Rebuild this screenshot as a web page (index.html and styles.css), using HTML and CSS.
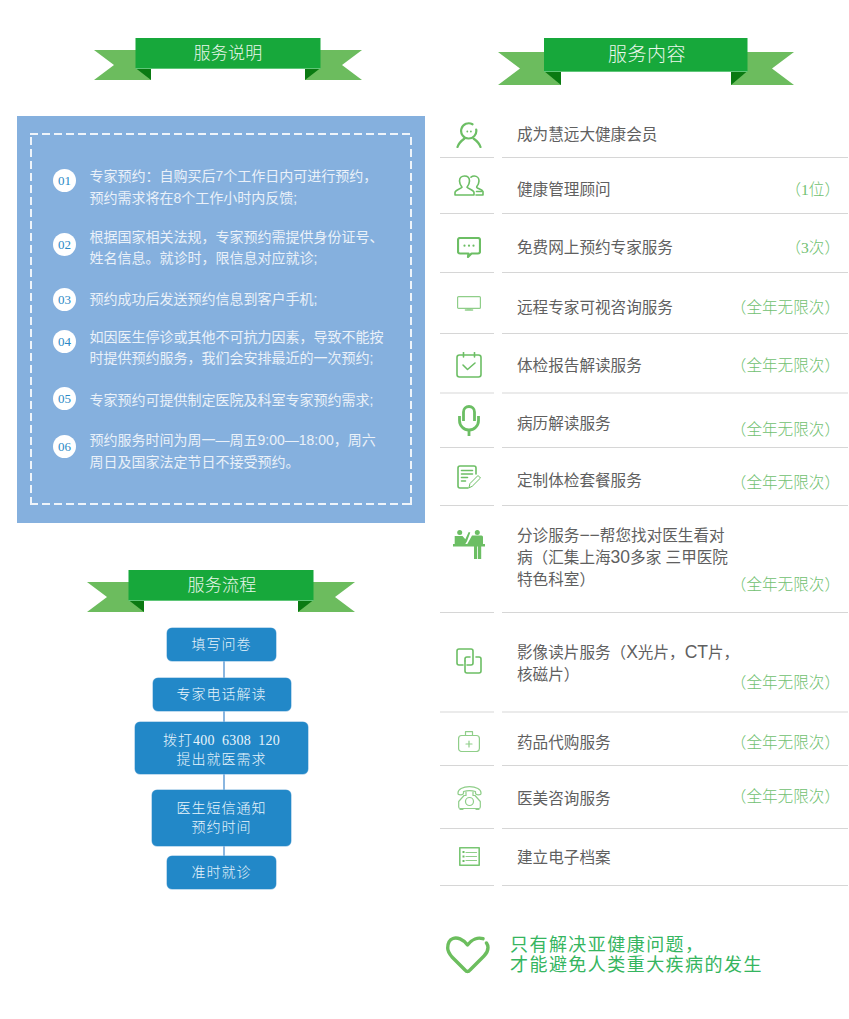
FILE: index.html
```html
<!DOCTYPE html>
<html lang="zh-CN">
<head>
<meta charset="utf-8">
<title>服务说明</title>
<link rel="stylesheet" href="styles.css">
</head>
<body>
<main class="page">
  <section class="col-left">
    <div class="ribbon ribbon-a">
      <svg class="ribbon-art" width="268" height="43" viewBox="0 0 268 43">
        <polygon class="tail" points="0,12 57,12 57,42 0,42 20,27"/>
        <polygon class="tail" points="268,12 211,12 211,42 268,42 248,27"/>
        <polygon class="fold" points="41.5,30 57,30 57,42"/>
        <polygon class="fold" points="226.5,30 211,30 211,42"/>
        <rect class="band" x="41.5" y="0" width="185" height="30"/>
        <rect class="band-edge" x="41.5" y="30" width="185" height="1"/>
      </svg>
      <h2 class="ribbon-title">服务说明</h2>
    </div>

    <div class="panel">
      <ol class="notes">
        <li class="note-item"><span class="badge">01</span><p>专家预约：自购买后7个工作日内可进行预约，<br>预约需求将在8个工作小时内反馈;</p></li>
        <li class="note-item"><span class="badge">02</span><p>根据国家相关法规，专家预约需提供身份证号、<br>姓名信息。就诊时，限信息对应就诊;</p></li>
        <li class="note-item"><span class="badge">03</span><p>预约成功后发送预约信息到客户手机;</p></li>
        <li class="note-item"><span class="badge">04</span><p>如因医生停诊或其他不可抗力因素，导致不能按<br>时提供预约服务，我们会安排最近的一次预约;</p></li>
        <li class="note-item"><span class="badge">05</span><p>专家预约可提供制定医院及科室专家预约需求;</p></li>
        <li class="note-item"><span class="badge">06</span><p>预约服务时间为周一—周五9:00—18:00，周六<br>周日及国家法定节日不接受预约。</p></li>
      </ol>
    </div>

    <div class="ribbon ribbon-b">
      <svg class="ribbon-art" width="268" height="43" viewBox="0 0 268 43">
        <polygon class="tail" points="0,12 57,12 57,42 0,42 20,27"/>
        <polygon class="tail" points="268,12 211,12 211,42 268,42 248,27"/>
        <polygon class="fold" points="41.5,30 57,30 57,42"/>
        <polygon class="fold" points="226.5,30 211,30 211,42"/>
        <rect class="band" x="41.5" y="0" width="185" height="30"/>
        <rect class="band-edge" x="41.5" y="30" width="185" height="1"/>
      </svg>
      <h2 class="ribbon-title">服务流程</h2>
    </div>

    <div class="flow">
      <div class="step step-s">填写问卷</div>
      <div class="link link-17"></div>
      <div class="step step-m">专家电话解读</div>
      <div class="link link-11"></div>
      <div class="step step-l"><span>拨打<span class="step-num">400&nbsp;&nbsp;6308&nbsp;&nbsp;120</span><br>提出就医需求</span></div>
      <div class="link link-16"></div>
      <div class="step step-m2">医生短信通知<br>预约时间</div>
      <div class="link link-10"></div>
      <div class="step step-s">准时就诊</div>
    </div>
  </section>

  <section class="col-right">
    <div class="ribbon ribbon-c">
      <svg class="ribbon-art" width="296" height="47" viewBox="0 0 296 47">
        <polygon class="tail" points="0,14 63,14 63,47 0,47 22,30.5"/>
        <polygon class="tail" points="296,14 233,14 233,47 296,47 274,30.5"/>
        <polygon class="fold" points="46,33 63,33 63,47"/>
        <polygon class="fold" points="249.5,33 233,33 233,47"/>
        <rect class="band" x="46" y="0" width="203.5" height="33"/>
        <rect class="band-edge" x="46" y="33" width="203.5" height="1"/>
      </svg>
      <h2 class="ribbon-title ribbon-title-lg">服务内容</h2>
    </div>

    <ul class="services">
      <li class="row">
        <div class="row-icon">
          <svg class="ic ic-b" width="26" height="26" viewBox="0 0 26 26"><path d="M16.5 2.3A7.6 7.6 0 1 0 20.2 7.5"/><path d="M1.5 25C2.500 21.500 5 19 8.500 16.500"/><path d="M24.500 25C23.500 21.500 21 19 17.500 16.500"/><circle class="dot" cx="11.3" cy="9.5" r=".9"/><circle class="dot" cx="14.9" cy="9.5" r=".9"/></svg>
        </div>
        <div class="row-body"><p class="row-text">成为慧远大健康会员</p></div>
      </li>
      <li class="row">
        <div class="row-icon">
          <svg class="ic ic-m" width="30" height="21" viewBox="0 0 30 21"><path d="M1 20v-2.500c0-2.300 5-3.200 7-5.200-1.500-2-2.500-4-2.500-6.300C5.500 3 7.500 1 10.500 1s5 2 5 5c0 2.300-1 4.300-2.500 6.300 2 2 7 2.900 7 5.200V20z"/><path d="M17 2.200C18 1.400 19 1 20.200 1c3 0 4.800 2.300 4.800 5 0 2.200-1 4-2.300 5.800-.8 1.500 5.300 2.200 6.300 4.700v3.500h-7"/><path d="M22.500 16.500h5"/></svg>
        </div>
        <div class="row-body"><p class="row-text">健康管理顾问</p><span class="row-note">（1位）</span></div>
      </li>
      <li class="row">
        <div class="row-icon">
          <svg class="ic ic-b" width="24" height="21" viewBox="0 0 24 21"><path d="M3 1h18a2 2 0 0 1 2 2v11.500a2 2 0 0 1-2 2h-6.500L11 20l.5-3.500H3a2 2 0 0 1-2-2V3a2 2 0 0 1 2-2z"/><circle class="dot" cx="7.500" cy="8.700" r="1.100"/><circle class="dot" cx="12" cy="8.700" r="1.100"/><circle class="dot" cx="16.500" cy="8.700" r="1.100"/></svg>
        </div>
        <div class="row-body"><p class="row-text">免费网上预约专家服务</p><span class="row-note">（3次）</span></div>
      </li>
      <li class="row">
        <div class="row-icon">
          <svg class="ic ic-t" width="24" height="15" viewBox="0 0 24 15"><rect x=".6" y=".6" width="22.800" height="11.800" rx="1"/><path d="M8.500 14h7" stroke-width="1.600"/><path d="M10.500 12.800h3"/></svg>
        </div>
        <div class="row-body"><p class="row-text">远程专家可视咨询服务</p><span class="row-note">（全年无限次）</span></div>
      </li>
      <li class="row row-soft">
        <div class="row-icon">
          <svg class="ic ic-m" width="26" height="26" viewBox="0 0 26 26"><rect x="1" y="3" width="24" height="22" rx="2.500"/><path d="M7.500 .5v4.500M18.500 .5v4.500"/><path d="M7 13l4.500 4.500L19 11"/></svg>
        </div>
        <div class="row-body"><p class="row-text">体检报告解读服务</p><span class="row-note">（全年无限次）</span></div>
      </li>
      <li class="row">
        <div class="row-icon">
          <svg class="ic ic-h" width="22" height="31" viewBox="0 0 22 31"><path d="M5.500 16V7a5.500 5.500 0 0 1 11 0v9"/><path d="M1.500 11v4.500a9.500 9.500 0 0 0 19 0V11"/><path d="M11 25v6"/></svg>
        </div>
        <div class="row-body"><p class="row-text">病历解读服务</p><span class="row-note">（全年无限次）</span></div>
      </li>
      <li class="row">
        <div class="row-icon">
          <svg class="ic ic-m" width="24" height="24" viewBox="0 0 24 24"><path d="M19 9V3a2 2 0 0 0-2-2H3a2 2 0 0 0-2 2v18a2 2 0 0 0 2 2h8"/><path d="M4.500 5.500h11M4.500 9h11M4.500 12.500h6M4.500 16h4"/><path d="M12 22.500l1-4 8-8 2.500 2.500-8 8z" stroke-width="1"/></svg>
        </div>
        <div class="row-body"><p class="row-text">定制体检套餐服务</p><span class="row-note">（全年无限次）</span></div>
      </li>
      <li class="row">
        <div class="row-icon">
          <svg class="ic-fill" width="32" height="29" viewBox="0 0 32 29"><circle cx="6.700" cy="2.600" r="2.500"/><circle cx="24.300" cy="2.600" r="2.500"/><path d="M1.700 6h7.800l2.800 3.300L15.700 2l1.600.6-3.300 8.600-2 3.300H1.700z"/><path d="M19 5.600h9.500a1.500 1.500 0 0 1 1.500 1.500v7.400H14l5-8.900z"/><rect x="0" y="14" width="32" height="2.500"/><rect x="21" y="16" width="3.200" height="13"/><rect x="25" y="16" width="3.200" height="13"/></svg>
        </div>
        <div class="row-body"><p class="row-text">分诊服务<span class="row-latin">−−</span>帮您找对医生看对<br>病（汇集上海<span class="row-latin">30</span>多家 三甲医院<br>特色科室）</p><span class="row-note">（全年无限次）</span></div>
      </li>
      <li class="row row-soft">
        <div class="row-icon">
          <svg class="ic ic-m" width="26" height="26" viewBox="0 0 26 26"><path d="M7 17H3a2 2 0 0 1-2-2V3a2 2 0 0 1 2-2h12a2 2 0 0 1 2 2v12a2 2 0 0 1-2 2h-4"/><path d="M9 13v-2a2 2 0 0 1 2-2h3"/><path d="M20 9h3a2 2 0 0 1 2 2v12a2 2 0 0 1-2 2H11a2 2 0 0 1-2-2V13"/></svg>
        </div>
        <div class="row-body"><p class="row-text">影像读片服务（<span class="row-latin">X</span>光片，<span class="row-latin">CT</span>片，<br>核磁片）</p><span class="row-note">（全年无限次）</span></div>
      </li>
      <li class="row">
        <div class="row-icon">
          <svg class="ic ic-t" width="22" height="21" viewBox="0 0 22 21"><rect x=".6" y="4.500" width="20.800" height="16" rx="3"/><path d="M7.500 4.500V.7h7v3.800"/><path d="M11 10v6M8 13h6"/></svg>
        </div>
        <div class="row-body"><p class="row-text">药品代购服务</p><span class="row-note">（全年无限次）</span></div>
      </li>
      <li class="row">
        <div class="row-icon">
          <svg class="ic ic-t" width="25" height="24" viewBox="0 0 25 24"><path d="M1 7.500C.5 3.500 6 .7 12.500.7S24.500 3.500 24 7.500c0 1-1 1.300-2.500 1.300S18.500 8.500 18.500 7V5.500c-3.500-1-8.500-1-12 0V7c0 1.500-1 1.800-3 1.800S1 8.500 1 7.500z"/><path d="M9 6v3.500H7l-5.300 6V21a1.500 1.500 0 0 0 1.500 1.500h18.600a1.500 1.500 0 0 0 1.500-1.500v-5.500L18 9.500h-2V6"/><circle cx="12.500" cy="15.500" r="4"/><path d="M3 23.300h3M19 23.300h3"/></svg>
        </div>
        <div class="row-body"><p class="row-text">医美咨询服务</p><span class="row-note">（全年无限次）</span></div>
      </li>
      <li class="row">
        <div class="row-icon">
          <svg class="ic ic-t" width="21" height="19" viewBox="0 0 21 19"><rect class="list-frame" x=".8" y=".8" width="19.400" height="17.400"/><path class="list-bul" d="M3.500 5h2M3.500 9.500h2M3.500 14h2"/><path d="M7 5.500h10.500M7 9.500h10.500M7 13.500h10.500"/></svg>
        </div>
        <div class="row-body"><p class="row-text">建立电子档案</p></div>
      </li>
    </ul>

    <div class="slogan">
      <svg class="heart" width="44" height="38" viewBox="0 0 44 38"><path d="M37 2.700C32 1 26 3 21.500 9 17 3 11 1 7 2.500 3 4 1.700 8 1.700 12c0 3.500 1.800 6 4.300 9l13 13c1.500 2 3.500 2 5 0l14-14c3-3 4-6 4-8.500 0-1.500-.5-3-1.500-4.500"/></svg>
      <p class="slogan-text">只有解决亚健康问题，<br>才能避免人类重大疾病的发生</p>
    </div>
  </section>
</main>
</body>
</html>
```

FILE: styles.css
```css
* { box-sizing: border-box; }

html, body {
  margin: 0;
  padding: 0;
  background: #fff;
}

p, ol, ul, h2 {
  margin: 0;
  padding: 0;
  list-style: none;
  font-weight: 400;
}

.page {
  display: grid;
  grid-template-columns: 425px 409px;
  column-gap: 15px;
  width: 849px;
  height: 1019px;
  overflow: hidden;
  font-family: "Liberation Sans", "Noto Sans CJK SC", sans-serif;
}

/* ribbons */
.ribbon {
  display: grid;
  justify-items: center;
  align-items: start;
}
.ribbon > * { grid-area: 1 / 1; }
.ribbon-art { display: block; }
.tail { fill: #6cbc5e; }
.fold { fill: #0a7a12; }
.band { fill: #17a83b; }
.band-edge { fill: #5fc678; }

.ribbon-a { width: 268px; margin: 38px 0 0 94px; }
.ribbon-b { width: 268px; margin: 47px 0 0 87px; }
.ribbon-c { width: 296px; margin: 38px 0 0 58px; }

.ribbon-title {
  margin-top: 1px;
  font-family: "Liberation Serif", "Noto Sans CJK SC", serif;
  font-weight: 300;
  font-size: 17px;
  letter-spacing: .3px;
  line-height: 30px;
  color: #eaf7ec;
}
.ribbon-b .ribbon-title { margin-left: 2px; }
.ribbon-title-lg {
  margin: 0 0 0 2px;
  font-size: 19px;
  letter-spacing: .5px;
  line-height: 33px;
}

/* blue panel */
.panel {
  width: 408px;
  height: 407px;
  margin: 35px 0 0 17px;
  padding: 17px 13px 17px;
  background: #85b0de;
}
.notes {
  height: 372px;
  padding: 33px 20px 0 23px;
  background-image:
    repeating-linear-gradient(90deg, #eef4fa 0 8px, transparent 8px 12px),
    repeating-linear-gradient(90deg, #eef4fa 0 8px, transparent 8px 12px),
    repeating-linear-gradient(0deg, #eef4fa 0 8px, transparent 8px 12px),
    repeating-linear-gradient(0deg, #eef4fa 0 8px, transparent 8px 12px);
  background-size: 100% 2px, 100% 2px, 2px 100%, 2px 100%;
  background-position: 0 0, 0 100%, 0 0, 100% 0;
  background-repeat: no-repeat;
}
.note-item {
  display: flex;
  align-items: flex-start;
  column-gap: 13.500px;
  font-size: 14px;
  line-height: 21.500px;
  color: #eaf1f9;
  white-space: nowrap;
}
.note-item:nth-child(2) { margin-top: 17.500px; }
.note-item:nth-child(3) { margin-top: 19px; }
.note-item:nth-child(4) { margin-top: 16px; }
.note-item:nth-child(5) { margin-top: 20px; }
.note-item:nth-child(6) { margin-top: 19px; }

.badge {
  flex: none;
  display: flex;
  align-items: center;
  justify-content: center;
  width: 23px;
  height: 23px;
  border-radius: 50%;
  background: #fff;
  font-family: "Liberation Serif", serif;
  font-size: 13px;
  line-height: 1;
  color: #2b8ac6;
}
.note-item:nth-child(1) .badge { margin-top: 3px; }
.note-item:nth-child(2) .badge { margin-top: 6px; }
.note-item:nth-child(3) .badge { margin-top: -1px; }
.note-item:nth-child(4) .badge { margin-top: 3px; }
.note-item:nth-child(5) .badge { margin-top: -3px; }
.note-item:nth-child(6) .badge { margin-top: 5px; }

/* process flow */
.flow {
  display: flex;
  flex-direction: column;
  align-items: center;
  width: 443px;
  margin-top: 15px;
  font-family: "Liberation Serif", "Noto Sans CJK SC", serif;
}
.step {
  display: flex;
  align-items: center;
  justify-content: center;
  text-align: center;
  border-radius: 5px;
  background: #2288c8;
  box-shadow: 0 0 0 .5px #7fb6de;
  color: #e8f4fb;
  font-size: 14px;
  letter-spacing: 1px;
  line-height: 19px;
  font-weight: 300;
}
.step-num { letter-spacing: .2px; }
.step-s { width: 109px; height: 33px; }
.step-m { width: 138px; height: 33px; }
.step-l { width: 173.500px; height: 52px; padding-top: 3px; }
.step-m2 { width: 138.500px; height: 56px; }
.link {
  width: 2px;
  margin-left: 5px;
  background: #8ab6e0;
}
.link-17 { height: 17px; }
.link-11 { height: 11px; }
.link-16 { height: 16px; }
.link-10 { height: 10px; }

/* services */
.services { margin-top: 31px; }
.row {
  display: grid;
  grid-template-columns: 54px 346px;
  column-gap: 8px;
  height: var(--h);
}
.row-icon, .row-body {
  border-bottom: 1px solid #d6d6d6;
}
.row-soft .row-icon, .row-soft .row-body {
  border-bottom: 2px solid #ebebeb;
}
.row-icon {
  display: flex;
  justify-content: center;
  align-items: flex-start;
  padding-left: 4px;
  padding-top: var(--i);
}
.row-icon svg { display: block; flex: none; }
.row-body {
  display: flex;
  align-items: flex-start;
  justify-content: space-between;
  padding: 0 16px 0 15px;
}
.row-text {
  flex: 0 0 190px;
  min-width: 0;
  margin-top: var(--t);
  font-size: 15.600px;
  line-height: 22px;
  color: #606060;
  white-space: nowrap;
}
.row-latin { font-size: 17.500px; line-height: 1; }
.row-note {
  flex: none;
  margin-top: var(--n);
  margin-right: -8px;
  font-family: "Liberation Serif", "Noto Sans CJK SC", serif;
  font-weight: 300;
  font-size: 15.600px;
  line-height: 22px;
  color: #70bf70;
  white-space: nowrap;
}

.row:nth-child(1)  { --h: 42px;  --i: 6px;  --t: 8px;  --n: 8px; }
.row:nth-child(2)  { --h: 56px;  --i: 17px; --t: 21px; --n: 21px; }
.row:nth-child(3)  { --h: 59px;  --i: 23px; --t: 23px; --n: 23px; }
.row:nth-child(4)  { --h: 61px;  --i: 23px; --t: 24px; --n: 24px; }
.row:nth-child(5)  { --h: 60px;  --i: 18px; --t: 21px; --n: 21px; }
.row:nth-child(6)  { --h: 54px;  --i: 11px; --t: 19px; --n: 25px; }
.row:nth-child(7)  { --h: 58px;  --i: 17px; --t: 22px; --n: 24px; }
.row:nth-child(8)  { --h: 107px; --i: 24px; --t: 19px; --n: 68px; }
.row:nth-child(9)  { --h: 100px; --i: 35px; --t: 29px; --n: 59px; }
.row:nth-child(10) { --h: 53px;  --i: 18px; --t: 19px; --n: 19px; }
.row:nth-child(11) { --h: 63px;  --i: 20px; --t: 22px; --n: 20px; }
.row:nth-child(12) { --h: 57px;  --i: 18px; --t: 18px; --n: 18px; }

/* icons */
.ic { fill: none; stroke: #6cbe64; stroke-linecap: round; stroke-linejoin: round; }
.ic-b { stroke-width: 2.200; }
.ic-m { stroke-width: 1.600; }
.ic-h { stroke-width: 2.800; stroke-linecap: butt; }
.ic-t { stroke: #8fce89; stroke-width: 1.200; }
.dot { fill: #6cbe64; stroke: none; }
.ic-fill { fill: #6cbe64; }
.list-frame { stroke: #79c673; stroke-width: 1.600; }
.list-bul { stroke: #6cbe64; stroke-width: 2.200; stroke-linecap: butt; }

/* slogan */
.slogan {
  display: flex;
  align-items: flex-start;
  column-gap: 20px;
  margin: 49px 0 0 6px;
}
.heart {
  display: block;
  flex: none;
  margin-top: 1px;
  fill: none;
  stroke: #6cbe5e;
  stroke-width: 3.400;
  stroke-linecap: round;
  stroke-linejoin: round;
}
.slogan-text {
  font-family: "Liberation Serif", "Noto Sans CJK SC", serif;
  font-weight: 400;
  font-size: 18px;
  letter-spacing: 1.450px;
  line-height: 20px;
  color: #35b560;
  white-space: nowrap;
}
```
